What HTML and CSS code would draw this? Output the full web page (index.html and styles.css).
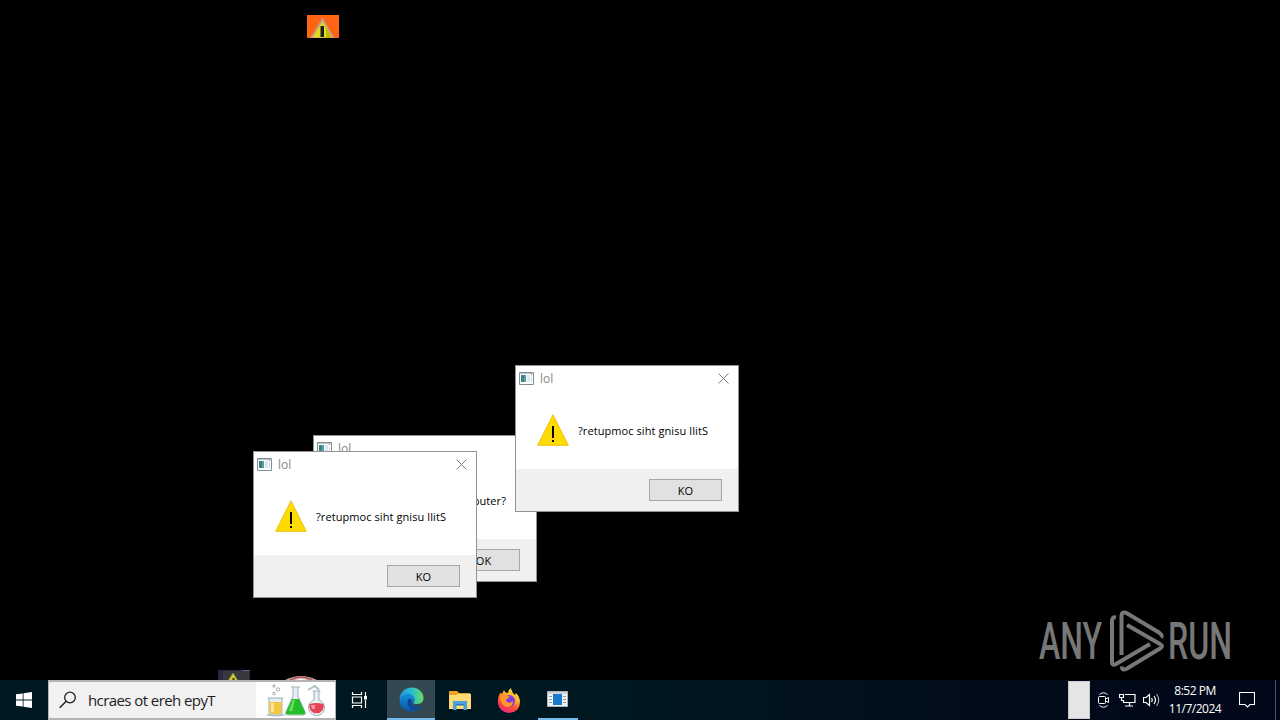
FILE: index.html
```html
<!DOCTYPE html>
<html lang="en">
<head>
    <meta charset="UTF-8">
    <meta name="viewport" content="width=device-width, initial-scale=1.0">
    <title>Desktop</title>
    <link rel="stylesheet" href="styles.css">
</head>

<body>
    <svg class="symbols" width="0" height="0">
        <symbol id="app" viewBox="0 0 15 13">
            <path fill="#fff" stroke="#858e95" d="M.5.5h14v12H.5z"/>
            <path fill="#b7c4cb" d="M1 1h13v1H1z"/>
            <path fill="#3b8580" d="M2 3h5v7H2z"/>
            <path fill="#5c9aac" d="M5 3h2v7H5z"/>
            <path fill="#dce8ee" d="M8 3h3v7H8z"/>
            <path fill="#b9dce6" d="M12 5h1v5h-1z"/>
            <path fill="#c45a62" d="M12 2h1v1h-1z"/>
        </symbol>
        <symbol id="warn" viewBox="0 0 32 32">
            <path fill="#ffdc00" stroke="#eebf16" d="M16 .8 31.3 31.3H.7z"/>
            <path fill="#000" d="M15 12h2v12h-2zM15 26h2v2h-2z"/>
        </symbol>
        <symbol id="close" viewBox="0 0 11 11">
            <path fill="none" stroke="#7c7c7c" d="m.5.5 10 10m0-10-10 10"/>
        </symbol>
    </svg>

    <div class="desktop">
        <svg class="glitch glitch-top" width="32" height="23" viewBox="0 0 32 23">
            <path fill="#ff6412" d="M0 0h32v23H0z"/>
            <path fill="#e4dc18" stroke="#c3a18b" stroke-width="2" d="M15.500 4.500 26.500 23.500H4z"/>
            <path fill="#c4b800" d="m19 12 6 11h-6z"/>
            <path fill="#1b211c" d="M13.500 11h3.500v11h-3.500z"/>
        </svg>
        <svg class="glitch glitch-left" width="32" height="10" viewBox="0 0 32 10">
            <path fill="#29263f" d="M0 0h32v10H0z"/>
            <path fill="#38383d" d="M5 1h26v9H5z"/>
            <path fill="#5a5799" d="M24 0h8v1h-8z"/>
            <path fill="#d2ce2b" stroke="#8c8b4c" d="m15 3 5 8H10z"/>
            <path fill="#343315" d="M14.500 8h2v2h-2z"/>
        </svg>
        <svg class="glitch glitch-right" width="32" height="5" viewBox="0 0 32 5">
            <path fill="#b8a8a8" d="M0 5Q16-3 32 5z"/>
            <path fill="none" stroke="#c14c50" stroke-width="1.500" d="M5 5q11-6 22 0"/>
            <path fill="#eee" d="M10 5q6-3 12 0z"/>
        </svg>

        <div class="dialog dialog-back">
            <div class="title">
                <svg width="15" height="13"><use href="#app"/></svg>
                <span>lol</span>
                <svg class="close" width="11" height="11"><use href="#close"/></svg>
            </div>
            <div class="message">
                <svg width="32" height="32"><use href="#warn"/></svg>
                <p>Still using this computer?</p>
            </div>
            <div class="buttons"><button>OK</button></div>
        </div>

        <div class="dialog dialog-left">
            <div class="title">
                <svg width="15" height="13"><use href="#app"/></svg>
                <span>lol</span>
                <svg class="close" width="11" height="11"><use href="#close"/></svg>
            </div>
            <div class="message">
                <svg width="32" height="32"><use href="#warn"/></svg>
                <p>?retupmoc siht gnisu llitS</p>
            </div>
            <div class="buttons"><button>KO</button></div>
        </div>

        <div class="dialog dialog-right">
            <div class="title">
                <svg width="15" height="13"><use href="#app"/></svg>
                <span>lol</span>
                <svg class="close" width="11" height="11"><use href="#close"/></svg>
            </div>
            <div class="message">
                <svg width="32" height="32"><use href="#warn"/></svg>
                <p>?retupmoc siht gnisu llitS</p>
            </div>
            <div class="buttons"><button>KO</button></div>
        </div>

        <svg class="watermark" width="242" height="72" viewBox="0 0 242 72">
            <g class="watermark-text">
                <text x="3" y="52" textLength="63" lengthAdjust="spacingAndGlyphs">ANY</text>
                <text x="132" y="52" textLength="64" lengthAdjust="spacingAndGlyphs">RUN</text>
            </g>
            <g fill="none" stroke="#777" stroke-width="4" stroke-linejoin="round">
                <path d="M80 10.500q-4-1-4 4V55q0 4 4 2l34-20"/>
                <path d="M85.500 48V9q0-5 5-3L123 25.500q4 3 2 5"/>
                <path d="m91 18 33 19q4 2 0 4.500L91 61.500q-5 3-5-2"/>
            </g>
        </svg>
    </div>

    <div class="taskbar">
        <div class="start">
            <svg width="16" height="16" viewBox="0 0 16 16">
                <path fill="#fff" d="M0 2.300 6.700 1.400v6.200H0zM7.500 1.200 16 0v7.600H7.500zM0 8.400h6.700v6.200L0 13.700zM7.500 8.400H16V16l-8.500-1.200z"/>
            </svg>
        </div>
        <div class="search">
            <svg class="search-icon" width="18" height="18" viewBox="0 0 18 18">
                <circle cx="11" cy="6.500" r="5.300" fill="none" stroke="#222" stroke-width="1.300"/>
                <path stroke="#222" stroke-width="1.400" d="m7.200 10.300-6.500 6.500"/>
            </svg>
            <span>hcraes ot ereh epyT</span>
            <svg class="flasks" width="79" height="36" viewBox="0 0 79 36">
                <path fill="#fff" d="M0 0h79v36H0z"/>
                <g fill="none" stroke="#9eafb8">
                    <circle cx="18" cy="4" r="1.200"/>
                    <circle cx="22" cy="7.500" r="1.700"/>
                    <circle cx="18" cy="11.500" r="1.300"/>
                </g>
                <ellipse cx="20" cy="33" rx="10" ry="1.500" fill="#c6c8cd"/>
                <path fill="#e5eef2" stroke="#98afba" d="M11.500 16h16M13 16v15q0 2 2 2h9q2 0 2-2V16"/>
                <path fill="#f4c63e" d="M13.500 20h12v10q0 2-2 2h-8q-2 0-2-2z"/>
                <path fill="#ffe19c" d="M15 21h3v9h-3z"/>
                <path fill="#e5eff3" stroke="#9bb3b9" d="M35 5h9M37 5v9l-7 16q-1 3 2 3h15q3 0 2-3l-7-16V5"/>
                <path fill="#25be2b" d="M36 17h7l6 13q1 2.500-2 2.500H32q-3 0-2-2.500z"/>
                <path fill="#76dc65" d="m37 18-4 11h3l3-11z"/>
                <path fill="none" stroke="#aabec6" stroke-width="2" d="m52 8 7-4 4 4"/>
                <path fill="#e8f0f4" stroke="#9bafb9" d="M56.500 9h8M58 9v9a8 8 0 1 0 5 0V9"/>
                <path fill="#e64558" d="M53.500 22q7-2 14 0a7.300 7.300 0 1 1-14 0z"/>
                <path fill="#f29ba2" d="M55 23h4v4h-3z"/>
            </svg>
        </div>
        <div class="task taskview">
            <svg width="18" height="16" viewBox="0 0 18 16">
                <path fill="none" stroke="#fff" stroke-width="1.200" d="M1.500 0v2.500h9V0M1.500 5h9v6h-9zM1.500 16v-2.500h9V16M14.500 0v4M14.500 8v8"/>
                <path fill="#fff" d="M13 4h3v3.500h-3z"/>
            </svg>
        </div>
        <div class="task active">
            <svg width="25" height="25" viewBox="0 0 25 25">
                <defs>
                    <linearGradient id="edgeTop"><stop stop-color="#239be0"/><stop offset=".5" stop-color="#2bbdd0"/><stop offset="1" stop-color="#66dd63"/></linearGradient>
                    <linearGradient id="edgeBottom" x2="0" y2="1"><stop stop-color="#1993e2"/><stop offset="1" stop-color="#0755a8"/></linearGradient>
                </defs>
                <path fill="url(#edgeBottom)" d="M.5 12C1 7 5.500 5.500 9 6c5 .5 7 4 6 7-3 6 3 8 8 6-3 4-7 5.500-11 5.500C5 24.500.5 19 .5 12z"/>
                <path fill="#11458e" d="M9 12c-2 7 3 11.500 8 11.200 2-.5 4.500-2 6-4.200-4 2-10 1-10-4.500 0-2-2-3-4-2.500z"/>
                <path fill="url(#edgeTop)" d="M.5 11.500C2 4 7 .5 12.500.5c7 0 12 5 12 10.500 0 5-4 6-7 6-3.500 0-3.500-1.500-2-3.500C17 8 7 2 .5 11.500z"/>
            </svg>
        </div>
        <div class="task">
            <svg width="22" height="19" viewBox="0 0 22 19">
                <path fill="#e9a522" d="M0 0h8l2 2h11v6H0z"/>
                <path fill="#ffdb76" d="M0 4h7l2-1h13v15H0z"/>
                <path fill="#4aa0dc" d="M4 10h14v9h-3.500v-5h-7v5H4z"/>
                <path fill="#2879b7" d="M7 13h8v1.500H7z"/>
            </svg>
        </div>
        <div class="task firefox">
            <svg width="24" height="25" viewBox="0 0 24 25">
                <defs>
                    <linearGradient id="fox" x1=".8" y1="0" x2=".3" y2="1"><stop stop-color="#fff04c"/><stop offset=".35" stop-color="#ffb32b"/><stop offset=".65" stop-color="#ff5034"/><stop offset="1" stop-color="#ec247a"/></linearGradient>
                </defs>
                <path fill="url(#fox)" d="M3 5q2 0 2 1l2-4q1 3 4 3 0-3 3-5 1 5 4 7l1-2q4 4 4 9 0 10-11 11Q2 24 1 15 .5 9 3 5z"/>
                <circle cx="12" cy="13" r="6" fill="#803be2"/>
                <path fill="#ff9929" d="M3 9q4-4 8-1l2 1-3 2q-2 1 0 3 3 2 6-1 0 6-6 6Q4 18 3 9z"/>
                <path fill="#ffbc32" d="M13 2q1 4 5 6 3 4 0 8 4-2 4-6-1-3-3-4l-1 2q-3-1-5-6z"/>
            </svg>
        </div>
        <div class="task running">
            <svg width="21" height="16" viewBox="0 0 21 16">
                <path fill="#f1f3f5" stroke="#aab4bc" d="M.5.5h20v15H.5z"/>
                <path fill="#cbd2d8" d="M1 1h19v2H1z"/>
                <path fill="#187bd0" d="M6 3h9v11H6z"/>
                <path stroke="#8c99a3" d="M2 5.500h3M2 8.500h3M2 11.500h3M16 5.500h3M16 8.500h3M16 11.500h3"/>
            </svg>
        </div>
        <div class="tray">
            <div class="tray-block"></div>
            <svg class="meet" width="12" height="16" viewBox="0 0 12 16">
                <path fill="none" stroke="#fff" d="M1.500 2.500Q5.500-1 9.500 2.500M1.500 13.500q4 3.500 8 0M1.500 4.500h5q1 0 1 1v5q0 1-1 1h-5q-1 0-1-1v-5q0-1 1-1zM7.500 7l3-1.500v5l-3-1.500"/>
            </svg>
            <svg class="network" width="17" height="14" viewBox="0 0 17 14">
                <path fill="none" stroke="#fff" stroke-width="1.200" d="M6 1.500h10v8H4.500V7M10.500 9.500v3M6 13h8M.5 1.500h4v3h-4zM2.500 4.500v3h2"/>
            </svg>
            <svg class="volume" width="17" height="14" viewBox="0 0 17 14">
                <path fill="none" stroke="#fff" stroke-width="1.200" d="M.5 4.500h2.500l3.500-3v11L3 9.500H.5zM8.500 5q1.500 2 0 4M11 3q3 4 0 8"/>
                <path fill="none" stroke="#c5cad3" d="M13.500 1q4.500 6 0 12"/>
            </svg>
            <div class="clock"><span>8:52 PM</span><span>11/7/2024</span></div>
            <svg class="notice" width="16" height="16" viewBox="0 0 16 16">
                <path fill="none" stroke="#fff" stroke-width="1.100" d="M.5.5h15v12H11L8.500 15 6 12.500H.5z"/>
            </svg>
            <div class="show-desktop"></div>
        </div>
    </div>
</body>
</html>
```
FILE: styles.css
```css
* {
    margin: 0;
    padding: 0;
    box-sizing: border-box;
}
body, html {
    width: 1280px;
    height: 720px;
    font-family: 'Open Sans', 'Noto Sans', sans-serif;
    background: #000;
    overflow: hidden;
}
body {
    display: flex;
    flex-direction: column;
}
svg {
    display: block;
    flex-shrink: 0;
}
.symbols {
    position: absolute;
}
.desktop {
    position: relative;
    height: 680px;
}

/* Desktop windows */
.dialog {
    position: absolute;
    display: flex;
    flex-direction: column;
    width: 224px;
    height: 147px;
    background: #fff;
    border: 1px solid #929292;
}
.dialog-back {
    left: 313px;
    top: 435px;
}
.dialog-left {
    left: 253px;
    top: 451px;
}
.dialog-right {
    left: 515px;
    top: 365px;
}
.title {
    display: flex;
    align-items: center;
    height: 23px;
    margin-top: 1px;
    padding: 0 9px 0 3px;
    color: #888;
    font-size: 12px;
}
.title span {
    margin-left: 6px;
}
.close {
    margin-left: auto;
}
.message {
    display: flex;
    align-items: center;
    height: 79px;
    padding-left: 21px;
}
.message p {
    margin-left: 9px;
    padding-top: 2px;
    color: #000;
    font-size: 11px;
    letter-spacing: 0.08px;
    white-space: nowrap;
}
.buttons {
    display: flex;
    flex: 1;
    justify-content: flex-end;
    align-items: center;
    padding-right: 16px;
    background: #f0f0f0;
}
.buttons button {
    width: 73px;
    height: 22px;
    background: #e1e1e1;
    border: 1px solid #a6a6a6;
    font: 11px 'Open Sans', sans-serif;
}

/* Icon fragments and watermark */
.glitch {
    position: absolute;
}
.glitch-top {
    left: 307px;
    top: 15px;
}
.glitch-left {
    left: 218px;
    top: 670px;
}
.glitch-right {
    left: 285px;
    top: 675px;
}
.watermark {
    position: absolute;
    left: 1036px;
    top: 607px;
    overflow: visible;
}
.watermark-text {
    fill: #777;
    font-family: Roboto, sans-serif;
    font-size: 52px;
    font-weight: 500;
}

/* Taskbar */
.taskbar {
    display: flex;
    height: 40px;
    background: linear-gradient(90deg, #001820 0%, #001720 50%, #020d1b 75%, #010719 100%);
}
.start {
    display: flex;
    align-items: center;
    justify-content: center;
    width: 48px;
}
.search {
    display: flex;
    align-items: center;
    width: 288px;
    height: 40px;
    background: #f1f1f1;
    border: 2px solid #b3b3b3;
    border-left-width: 1px;
    border-right-width: 1px;
}
.search-icon {
    margin-left: 10px;
}
.search span {
    margin-left: 11px;
    color: #222;
    font-size: 15px;
    font-weight: 400;
    letter-spacing: -0.58px;
    white-space: nowrap;
}
.flasks {
    margin-left: auto;
}
.task {
    display: flex;
    align-items: center;
    justify-content: center;
    width: 48px;
    margin-right: 1px;
}
.taskview {
    margin-right: 3px;
}
.active {
    background: #334850;
    border-bottom: 2px solid #76b9ed;
}
.running {
    width: 40px;
    margin-left: 4px;
    padding-right: 1px;
    border-bottom: 2px solid #76b9ed;
}
.tray {
    display: flex;
    align-items: center;
    width: 212px;
    margin-left: auto;
    color: #fff;
}
.tray-block {
    width: 22px;
    height: 38px;
    background: #e5e5e5;
    border: 1px solid #c9c9c9;
}
.meet {
    margin-left: 8px;
}
.network {
    margin-left: 9px;
}
.volume {
    margin-left: 7px;
}
.clock {
    display: flex;
    flex-direction: column;
    width: 66px;
    margin-left: 2px;
    text-align: center;
    font-size: 12px;
    line-height: 18px;
    letter-spacing: -0.5px;
}
.notice {
    margin-left: 11px;
}
.show-desktop {
    width: 1px;
    height: 40px;
    margin-left: auto;
    margin-right: 4px;
    background: #4c5360;
}
```
